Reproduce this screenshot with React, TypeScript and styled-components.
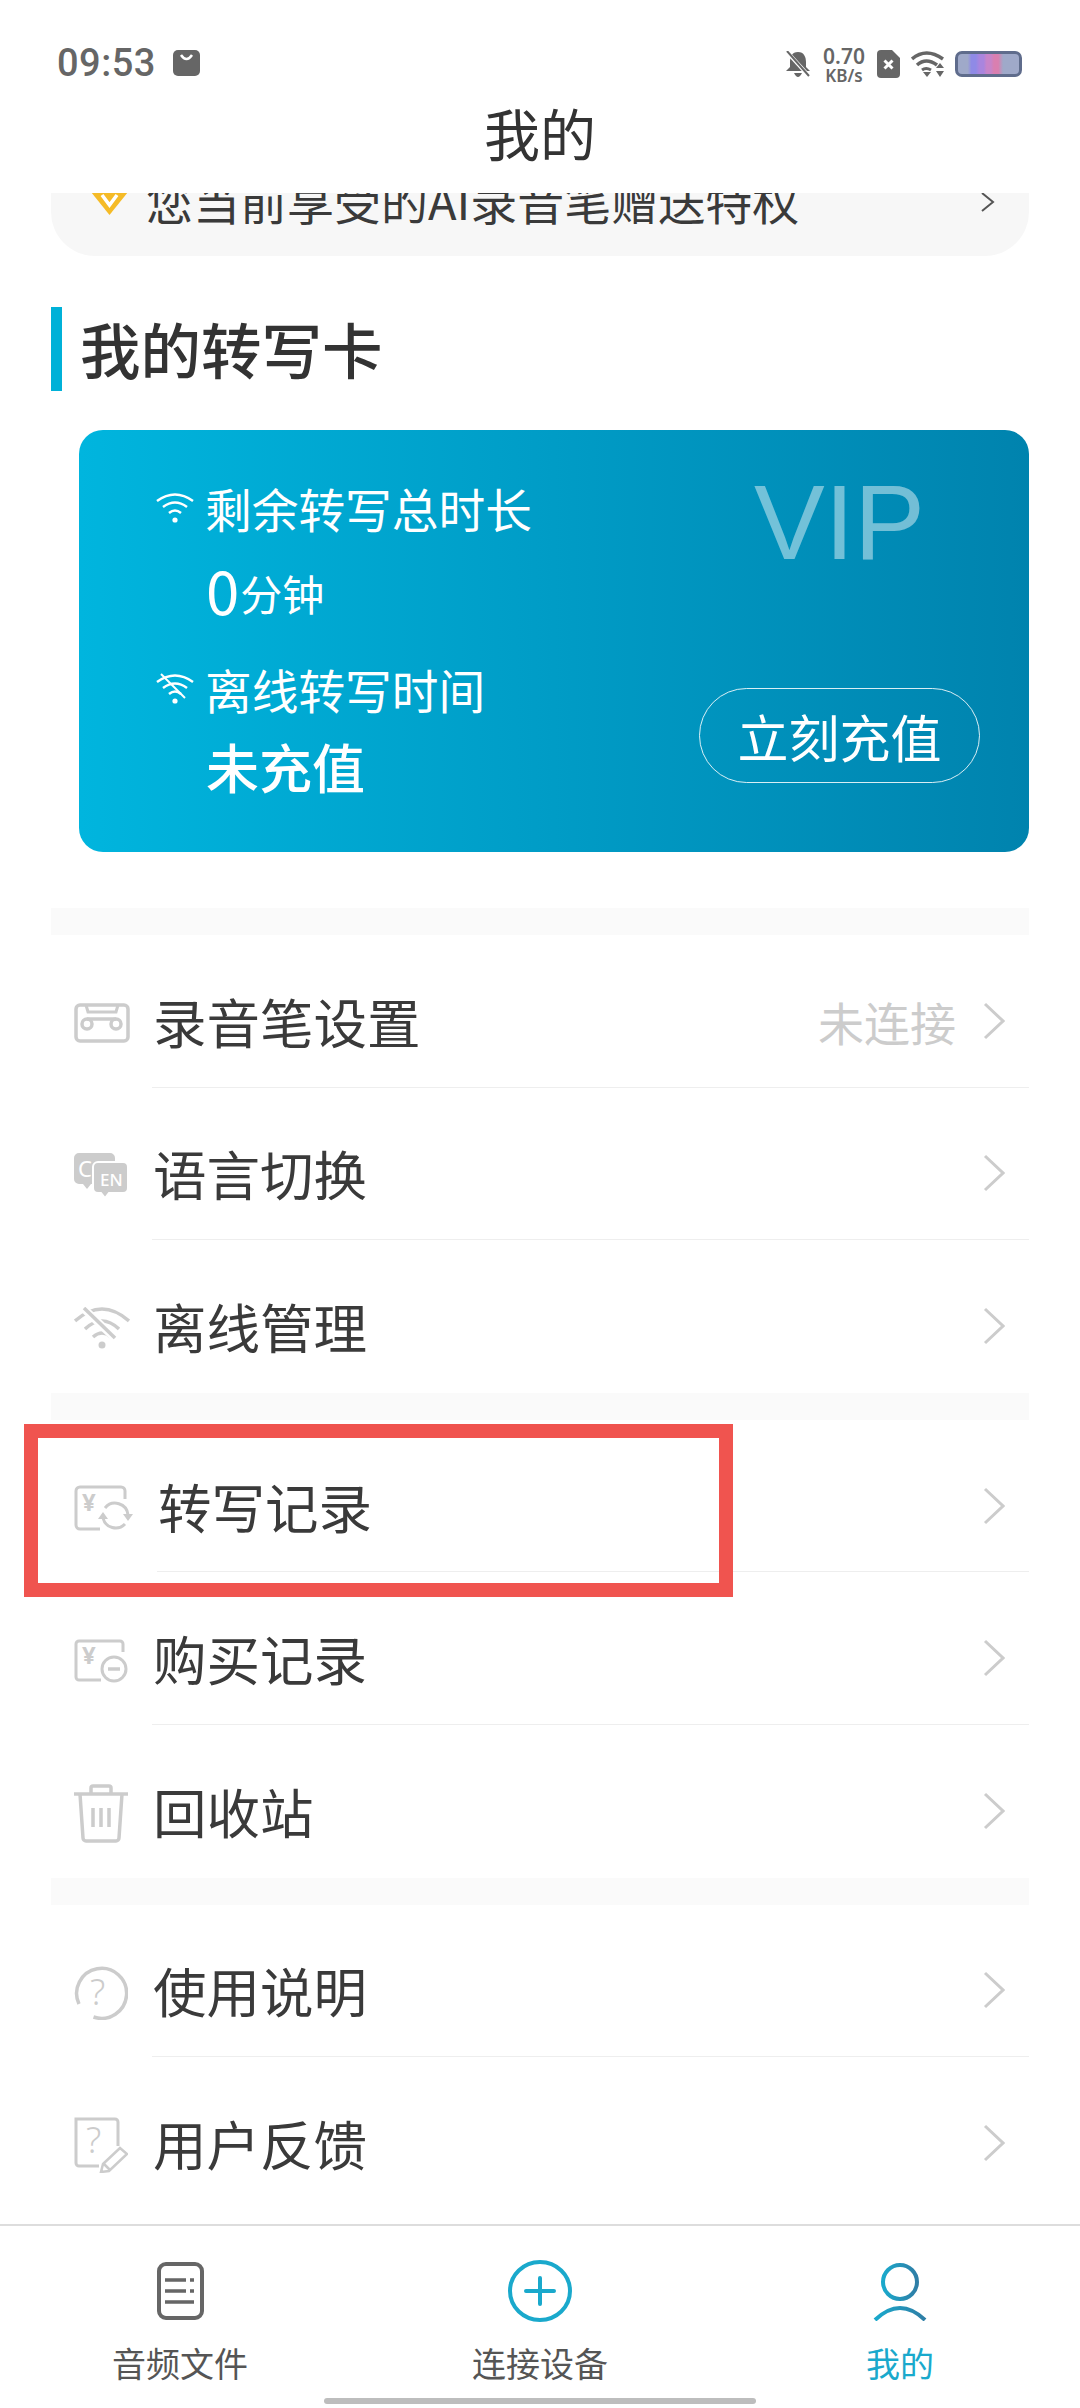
import { ReactNode } from "react";
import { createGlobalStyle, styled } from "styled-components";

const GlobalStyle = createGlobalStyle`
  html, body {
    margin: 0;
    padding: 0;
    background: #fff;
  }
  body {
    font-family: "Noto Sans CJK SC", "Noto Sans", sans-serif;
    color: #3a3a3a;
  }
`;

const GRAY = "#cccccc";
const TEAL = "#1aa9cc";

function Chevron() {
  return (
    <svg width="22" height="38" viewBox="0 0 22 38" fill="none">
      <path d="M2 2 L20 19 L2 36" stroke={GRAY} strokeWidth="3" />
    </svg>
  );
}

function CassetteIcon() {
  return (
    <svg width="56" height="40" viewBox="0 0 56 40" fill="none" stroke={GRAY} strokeWidth="3.5">
      <rect x="2" y="2" width="52" height="36" rx="4" />
      <path d="M12 2 L14 9 H42 L44 2" strokeWidth="3" />
      <circle cx="13" cy="21" r="5" />
      <circle cx="42" cy="21" r="5" />
      <path d="M13 16 H42" />
    </svg>
  );
}

function LanguageIcon() {
  return (
    <svg width="56" height="46" viewBox="0 0 56 46">
      <path d="M5 0 H36 a5 5 0 0 1 5 5 V26 a5 5 0 0 1 -5 5 H17 L13 36 L9 31 H5 a5 5 0 0 1 -5 -5 V5 a5 5 0 0 1 5 -5 Z" fill={GRAY} />
      <path d="M24 9 H49 a5 5 0 0 1 5 5 V35 a5 5 0 0 1 -5 5 H35 L31 45 L27 40 H24 a5 5 0 0 1 -5 -5 V14 a5 5 0 0 1 5 -5 Z" fill={GRAY} stroke="#fff" strokeWidth="2" />
      <text x="4" y="24" fontSize="22" fontFamily="Noto Sans" fill="#fff">C</text>
      <text x="26" y="33" fontSize="17" fontWeight="500" fontFamily="Noto Sans" fill="#fff">EN</text>
    </svg>
  );
}

function WifiOffIcon() {
  return (
    <svg width="56" height="42" viewBox="0 0 56 42" fill="none" stroke={GRAY} strokeWidth="3.5">
      <path d="M1 14 Q28 -10 55 14" />
      <path d="M11 22 Q28 6 45 22" />
      <path d="M19 30 Q28 22 37 30" />
      <path d="M7 -1 L44 34" stroke="#fff" strokeWidth="8" />
      <path d="M10 1 L41 31" />
      <circle cx="28" cy="38" r="3.5" fill={GRAY} stroke="none" />
    </svg>
  );
}

function CardRefreshIcon() {
  return (
    <svg width="60" height="47" viewBox="0 0 60 47" fill="none" stroke={GRAY} strokeWidth="3">
      <path d="M26 44 H6 a4 4 0 0 1 -4 -4 V6 a4 4 0 0 1 4 -4 H47 a4 4 0 0 1 4 4 V14" />
      <text x="8" y="26" fontSize="24" fontWeight="700" fontFamily="Noto Sans" fill={GRAY} stroke="none">¥</text>
      <path d="M31 23 A13 13 0 0 1 54 30" />
      <path d="M51 39 A13 13 0 0 1 29 33" />
      <path d="M49 29 H59 L54 36 Z M24 34 H34 L29 27 Z" fill={GRAY} stroke="none" />
    </svg>
  );
}

function CardMinusIcon() {
  return (
    <svg width="54" height="44" viewBox="0 0 54 44" fill="none" stroke={GRAY} strokeWidth="3">
      <path d="M27 41 H5 a3 3 0 0 1 -3 -3 V5 a3 3 0 0 1 3 -3 H46 a3 3 0 0 1 3 3 V13" />
      <text x="8" y="25" fontSize="24" fontWeight="700" fontFamily="Noto Sans" fill={GRAY} stroke="none">¥</text>
      <circle cx="40" cy="30" r="12" />
      <path d="M34 30 H46" strokeWidth="3.5" />
    </svg>
  );
}

function TrashIcon() {
  return (
    <svg width="54" height="59" viewBox="0 0 54 59" fill="none" stroke={GRAY} strokeWidth="3.5">
      <path d="M0 10 H54" />
      <path d="M17 9 V4 a2 2 0 0 1 2 -2 H35 a2 2 0 0 1 2 2 V9" />
      <path d="M6 10 L9 54 a3 3 0 0 0 3 3 H42 a3 3 0 0 0 3 -3 L48 10" />
      <path d="M19 24 V43 M27 24 V43 M35 24 V43" />
    </svg>
  );
}

function HelpIcon() {
  return (
    <svg width="54" height="54" viewBox="0 0 54 54" fill="none" stroke={GRAY} strokeWidth="3.5">
      <path d="M19.5 51 A25 25 0 1 0 5 38" />
      <text x="16" y="39" fontSize="36" fontWeight="300" fontFamily="Noto Sans" fill={GRAY} stroke="none">?</text>
    </svg>
  );
}

function FeedbackIcon() {
  return (
    <svg width="54" height="56" viewBox="0 0 54 56" fill="none" stroke={GRAY} strokeWidth="3">
      <path d="M25 49 H5 a3 3 0 0 1 -3 -3 V2 H41 a3 3 0 0 1 3 3 V29" />
      <text x="12" y="36" fontSize="36" fontWeight="300" fontFamily="Noto Sans" fill={GRAY} stroke="none">?</text>
      <path d="M46 31 L53 37 L35 54 L27 55 L29 47 Z" strokeWidth="2.5" />
      <path d="M30 47 L36 53" strokeWidth="2.5" />
    </svg>
  );
}

function DocIcon() {
  return (
    <svg width="47" height="58" viewBox="0 0 47 58" fill="none" stroke="#666" strokeWidth="4">
      <rect x="2" y="2" width="43" height="54" rx="7" />
      <path d="M8 18 H29 M8 29 H29 M8 40 H37" strokeWidth="3.5" />
      <path d="M33 18 H37 M33 29 H37" strokeWidth="3.5" />
    </svg>
  );
}

function PlusIcon() {
  return (
    <svg width="64" height="62" viewBox="0 0 64 62" fill="none" stroke={TEAL} strokeWidth="4">
      <ellipse cx="32" cy="31" rx="30" ry="29" />
      <path d="M18 31 H46 M32 18 V44" strokeLinecap="round" />
    </svg>
  );
}

function PersonIcon() {
  return (
    <svg width="54" height="60" viewBox="0 0 54 60" fill="none" stroke="url(#personTone)" strokeWidth="4">
      <defs>
        <linearGradient id="personTone" x1="0" y1="0" x2="1" y2="0">
          <stop offset="0" stopColor={TEAL} />
          <stop offset="1" stopColor="#2f7ea6" />
        </linearGradient>
      </defs>
      <circle cx="27" cy="21" r="17" />
      <path d="M2 59 Q27 35 52 59" />
    </svg>
  );
}

function CardWifi({ off }: { off?: boolean }) {
  return (
    <svg width="38" height="32" viewBox="0 0 38 32" fill="none" stroke="#fff" strokeWidth="2.5">
      <path d="M1 9 Q19 -4 37 9" />
      <path d="M7 15 Q19 6 31 15" />
      <path d="M13 21 Q19 16 25 21" />
      {off && <path d="M5 1 L29 25" strokeWidth="2" />}
      <circle cx="19" cy="28" r="2.6" fill="#fff" stroke="none" />
    </svg>
  );
}

interface RowItem {
  label: string;
  icon: ReactNode;
  hint?: string;
  marked?: boolean;
}

const groups: RowItem[][] = [
  [
    { label: "录音笔设置", icon: <CassetteIcon />, hint: "未连接" },
    { label: "语言切换", icon: <LanguageIcon /> },
    { label: "离线管理", icon: <WifiOffIcon /> },
  ],
  [
    { label: "转写记录", icon: <CardRefreshIcon />, marked: true },
    { label: "购买记录", icon: <CardMinusIcon /> },
    { label: "回收站", icon: <TrashIcon /> },
  ],
  [
    { label: "使用说明", icon: <HelpIcon /> },
    { label: "用户反馈", icon: <FeedbackIcon /> },
  ],
];

export default function App() {
  return (
    <Page>
      <GlobalStyle />
      <StatusBar>
        <StatusLeft>
          <Clock>09:53</Clock>
          <svg width="27" height="26" viewBox="0 0 27 26">
            <rect width="27" height="26" rx="5" fill="#666" />
            <path d="M8 5 Q13.5 13 19 5" fill="none" stroke="#fff" strokeWidth="2.5" />
          </svg>
        </StatusLeft>
        <StatusRight>
          <svg width="26" height="26" viewBox="0 0 26 26">
            <path d="M13 1 C7 1 5 6 5 11 V16 L1 20 H25 L21 16 V11 C21 6 19 1 13 1 Z M9 22 H17 Q15 26 13 26 Q11 26 9 22 Z" fill="#666" />
            <path d="M2 1 L24 25" stroke="#fff" strokeWidth="4" />
            <path d="M2 0 L24 25" stroke="#666" strokeWidth="2" />
          </svg>
          <NetSpeed>
            <b>0.70</b>
            <span>KB/s</span>
          </NetSpeed>
          <svg width="23" height="28" viewBox="0 0 23 28">
            <path d="M4 0 H15 L23 8 V24 a4 4 0 0 1 -4 4 H4 a4 4 0 0 1 -4 -4 V4 a4 4 0 0 1 4 -4 Z" fill="#666" />
            <path d="M7.5 10.5 L15.5 18.5 M15.5 10.5 L7.5 18.5" stroke="#fff" strokeWidth="3" />
          </svg>
          <svg width="33" height="26" viewBox="0 0 33 26" fill="none" stroke="#666" strokeWidth="3.5">
            <path d="M1 8 Q15 -4 32 8" />
            <path d="M6 14 Q15 6 26 14" />
            <path d="M11 19 Q15 16 20 19" strokeWidth="3" />
            <path d="M12 21 H20 L16 26 Z" fill="#666" stroke="none" />
            <path d="M25 17 H33 L29 12 Z M25 20 H33 L29 26 Z" fill="#666" stroke="none" />
          </svg>
          <Battery />
        </StatusRight>
      </StatusBar>
      <Header>我的</Header>
      <Content>
        <Banner>
          <BannerMain>
            <svg width="37" height="24" viewBox="0 0 37 24">
              <path d="M0 0 H37 L18.5 23 Z" fill="#f5bb27" />
              <path d="M11 3 L18.5 13 L26 3" fill="none" stroke="#fff" strokeWidth="3.5" />
            </svg>
            <BannerText>您当前享受的AI录音笔赠送特权</BannerText>
          </BannerMain>
          <svg width="15" height="20" viewBox="0 0 15 20" fill="none">
            <path d="M2 1 L13 10 L2 19" stroke="#555" strokeWidth="2" />
          </svg>
        </Banner>

        <SectionHeading>
          <HeadingMark />
          <HeadingText>我的转写卡</HeadingText>
        </SectionHeading>

        <VipCard>
          <CardInfo>
            <InfoLabel>
              <CardWifi />
              <span>剩余转写总时长</span>
            </InfoLabel>
            <InfoValue>
              <Minutes>0</Minutes>
              <MinutesUnit>分钟</MinutesUnit>
            </InfoValue>
            <InfoLabel $second>
              <CardWifi off />
              <span>离线转写时间</span>
            </InfoLabel>
            <InfoValue $plain>未充值</InfoValue>
          </CardInfo>
          <CardSide>
            <VipMark>VIP</VipMark>
            <RechargeButton>立刻充值</RechargeButton>
          </CardSide>
        </VipCard>

        {groups.map((rows, i) => (
          <section key={i}>
            <Band />
            {rows.map((row, j) => (
              <Row key={row.label}>
                <RowIcon>{row.icon}</RowIcon>
                <RowBody $shifted={row.marked} $last={j === rows.length - 1}>
                  <RowLabel>{row.label}</RowLabel>
                  {row.hint && <RowHint>{row.hint}</RowHint>}
                  <Chevron />
                </RowBody>
                {row.marked && <MarkBox />}
              </Row>
            ))}
          </section>
        ))}
      </Content>
      <TabBar>
        <Tabs>
          <Tab>
            <TabIcon>
              <DocIcon />
            </TabIcon>
            <TabLabel>音频文件</TabLabel>
          </Tab>
          <Tab>
            <TabIcon>
              <PlusIcon />
            </TabIcon>
            <TabLabel>连接设备</TabLabel>
          </Tab>
          <Tab>
            <TabIcon>
              <PersonIcon />
            </TabIcon>
            <TabLabel $active>我的</TabLabel>
          </Tab>
        </Tabs>
        <HomeBar />
      </TabBar>
    </Page>
  );
}

const Page = styled.div`
  width: 1080px;
  height: 2408px;
  display: flex;
  flex-direction: column;
  overflow: hidden;
  background: #fff;
`;

const StatusBar = styled.div`
  height: 98px;
  flex: none;
  box-sizing: border-box;
  padding: 48px 58px 0 57px;
  display: flex;
  justify-content: space-between;
  align-items: flex-start;
`;

const StatusLeft = styled.div`
  display: flex;
  align-items: center;
  gap: 17px;
  height: 30px;
`;

const Clock = styled.span`
  font-family: Roboto, sans-serif;
  font-size: 38px;
  font-weight: 500;
  line-height: 30px;
  letter-spacing: 0.5px;
  color: #666;
`;

const StatusRight = styled.div`
  display: flex;
  align-items: center;
  gap: 11px;
  height: 32px;
`;

const NetSpeed = styled.div`
  display: flex;
  flex-direction: column;
  align-items: center;
  font-family: "Noto Sans", sans-serif;
  color: #666;
  width: 44px;

  b {
    font-size: 21px;
    font-weight: 600;
    line-height: 22px;
  }

  span {
    font-size: 17px;
    font-weight: 600;
    line-height: 17px;
  }
`;

const Battery = styled.div`
  width: 67px;
  height: 26px;
  box-sizing: border-box;
  border: 3px solid #5f6c8c;
  border-radius: 7px;
  background: linear-gradient(
    90deg,
    #9fa9c9 0 16%,
    #8f8ae6 22% 29%,
    #a985de 35% 42%,
    #c784c9 47% 54%,
    #d97fb0 59% 66%,
    #9fa9c9 74%
  );
`;

const Header = styled.div`
  height: 95px;
  flex: none;
  box-sizing: border-box;
  padding-bottom: 28px;
  display: flex;
  align-items: center;
  justify-content: center;
  font-size: 56px;
  line-height: 56px;
  color: #333;
`;

const Content = styled.div`
  flex: 1;
  min-height: 0;
  padding: 0 51px;
`;

const Banner = styled.div`
  height: 63px;
  box-sizing: border-box;
  overflow: hidden;
  padding: 0 34px 33px 40px;
  background: #f7f7f7;
  border-radius: 0 0 44px 44px;
  display: flex;
  justify-content: space-between;
  align-items: flex-end;

  > svg {
    margin-bottom: 11px;
  }
`;

const BannerMain = styled.div`
  display: flex;
  align-items: center;
  gap: 18px;

  > svg {
    margin-top: 8px;
  }
`;

const BannerText = styled.span`
  font-size: 47px;
  line-height: 47px;
  color: #3a3a3a;
  white-space: nowrap;
`;

const SectionHeading = styled.div`
  margin-top: 51px;
  display: flex;
  align-items: center;
  gap: 18px;
`;

const HeadingMark = styled.div`
  width: 11px;
  height: 84px;
  background: #00b1d8;
`;

const HeadingText = styled.h2`
  margin: 0;
  padding-bottom: 2px;
  font-size: 60.5px;
  line-height: 82px;
  font-weight: 500;
  color: #333;
`;

const VipCard = styled.div`
  margin: 39px 0 0 28px;
  height: 422px;
  box-sizing: border-box;
  padding: 0 49px 0 77px;
  border-radius: 24px;
  background: linear-gradient(90deg, #00b5de 0%, #0083ae 100%);
  color: #fff;
  display: flex;
  justify-content: space-between;
`;

const CardInfo = styled.div`
  padding-top: 55px;
`;

const InfoLabel = styled.div<{ $second?: boolean }>`
  display: flex;
  align-items: center;
  gap: 11px;
  margin-top: ${(p) => (p.$second ? "47px" : "0")};
  font-size: 46.7px;
  line-height: 46px;
`;

const InfoValue = styled.div<{ $plain?: boolean }>`
  margin: ${(p) => (p.$plain ? "23px" : "26px")} 0 0 50px;
  height: 62px;
  display: flex;
  align-items: center;
  font-size: 53px;
  font-weight: ${(p) => (p.$plain ? 500 : 400)};
`;

const Minutes = styled.span`
  font-size: 60px;
`;

const MinutesUnit = styled.span`
  font-size: 42px;
  margin: 8px 0 0 1px;
`;

const CardSide = styled.div`
  width: 281px;
  padding: 39px 0 69px;
  box-sizing: border-box;
  display: flex;
  flex-direction: column;
  align-items: center;
  justify-content: space-between;
`;

const VipMark = styled.div`
  font-family: "Liberation Sans", Arial, sans-serif;
  font-size: 106px;
  line-height: 106px;
  color: rgba(255, 255, 255, 0.45);
`;

const RechargeButton = styled.div`
  width: 281px;
  height: 95px;
  box-sizing: border-box;
  border: 1px solid rgba(255, 255, 255, 0.85);
  border-radius: 48px;
  display: flex;
  align-items: center;
  justify-content: center;
  font-size: 51px;
`;

const Band = styled.div`
  height: 27px;
  background: #fafafa;

  section:first-of-type & {
    margin-top: 56px;
  }
`;

const Row = styled.div`
  position: relative;
  height: 152.6px;
  display: flex;
`;

const RowIcon = styled.div`
  width: 101px;
  flex: none;
  box-sizing: border-box;
  padding: 24px 0 0 23px;
  display: flex;
  align-items: center;
`;

const RowBody = styled.div<{ $shifted?: boolean; $last?: boolean }>`
  flex: 1;
  min-width: 0;
  box-sizing: border-box;
  margin-left: ${(p) => (p.$shifted ? "5px" : "0")};
  padding: 20px 24px 0 0;
  display: flex;
  align-items: center;
  border-bottom: ${(p) => (p.$last ? "none" : "1.5px solid #eeeeee")};
`;

const RowLabel = styled.span`
  flex: 1;
  padding-left: 1px;
  font-size: 53.5px;
  line-height: 60px;
  color: #3a3a3a;
`;

const RowHint = styled.span`
  font-size: 46px;
  line-height: 60px;
  color: #cccccc;
  margin-right: 27px;
`;

const MarkBox = styled.div`
  position: absolute;
  left: -27px;
  top: 4px;
  width: 709px;
  height: 173px;
  box-sizing: border-box;
  border: 14px solid #f0544f;
  pointer-events: none;
`;

const TabBar = styled.div`
  height: 184px;
  flex: none;
  box-sizing: border-box;
  padding-top: 34px;
  border-top: 2px solid #dddddd;
  display: flex;
  flex-direction: column;
  align-items: center;
`;

const Tabs = styled.div`
  width: 100%;
  display: grid;
  grid-template-columns: repeat(3, 1fr);
`;

const Tab = styled.div`
  display: flex;
  flex-direction: column;
  align-items: center;
`;

const TabIcon = styled.div`
  height: 62px;
  display: flex;
  align-items: center;
  justify-content: center;
`;

const TabLabel = styled.span<{ $active?: boolean }>`
  margin-top: 24px;
  font-size: 34px;
  line-height: 34px;
  color: ${(p) => (p.$active ? TEAL : "#555555")};
`;

const HomeBar = styled.div`
  width: 432px;
  height: 6px;
  margin-top: 18px;
  border-radius: 3px;
  background: #bdbdbd;
`;
